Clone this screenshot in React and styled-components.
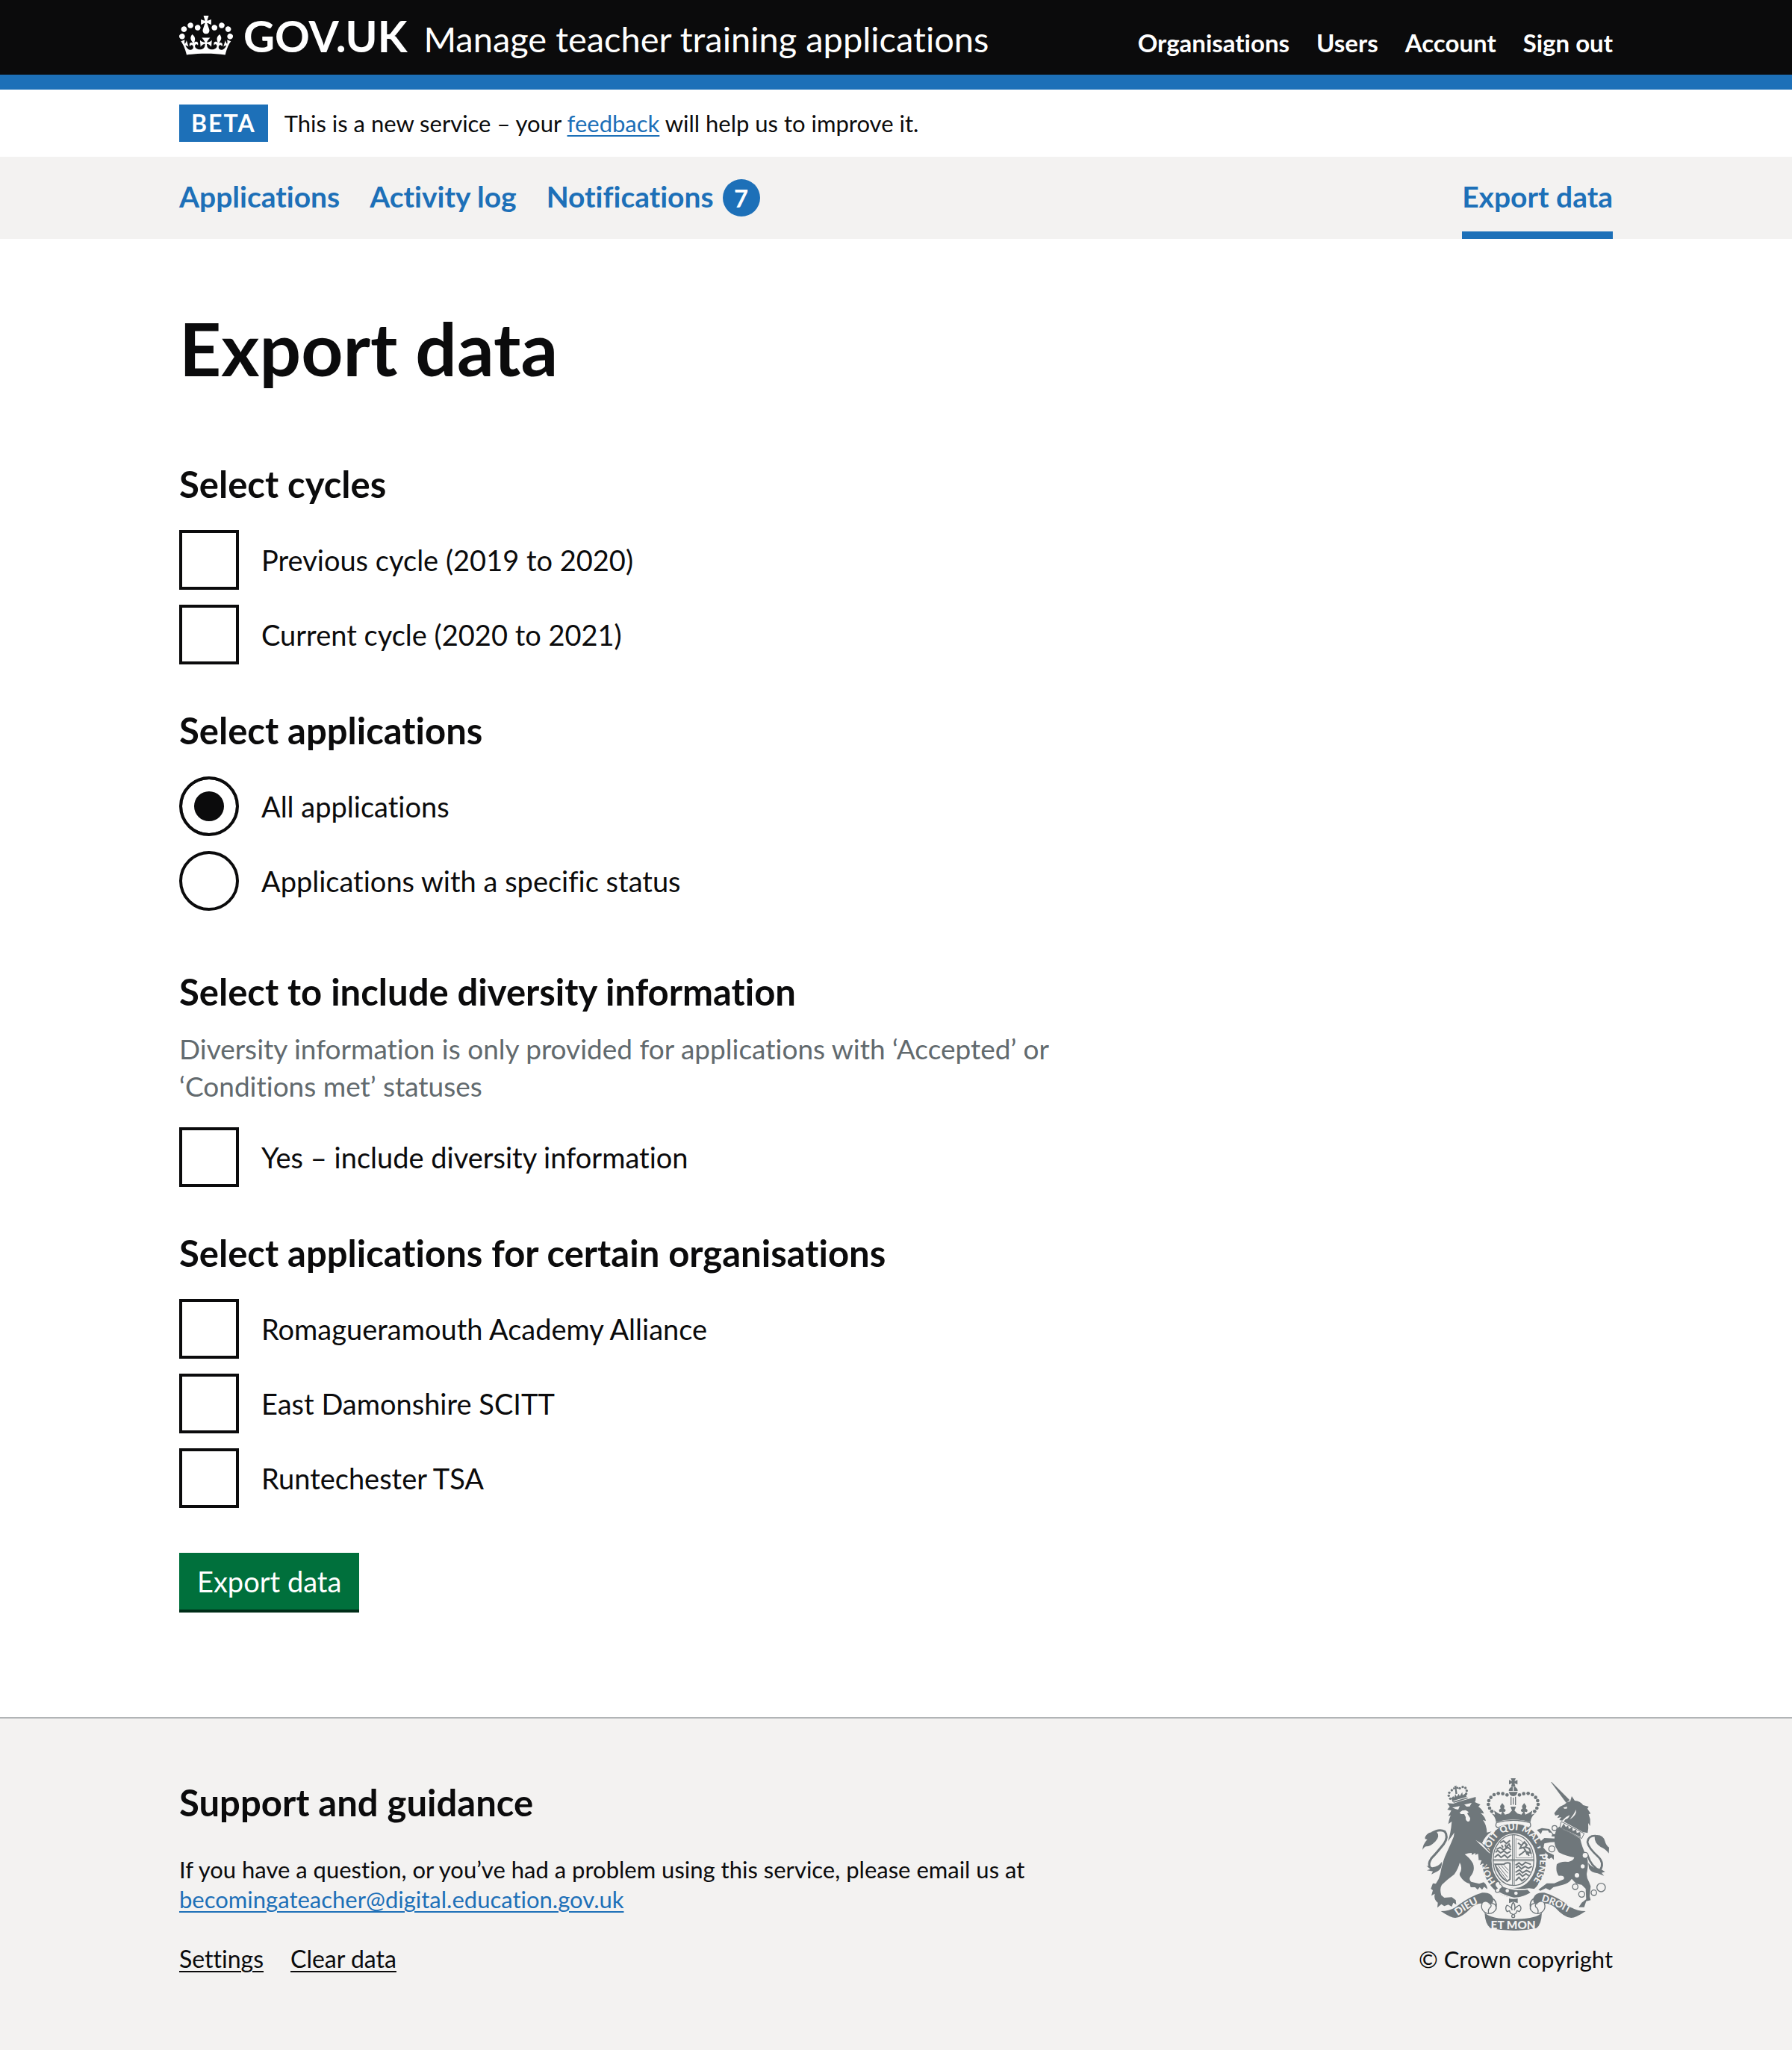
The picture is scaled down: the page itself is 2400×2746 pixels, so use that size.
import React from "react";
import styled, { createGlobalStyle } from "styled-components";

const blue = "#1d70b8";
const ink = "#0b0b0c";
const pale = "#f3f2f1";
const crestGrey = "#6f777b";

const GlobalStyle = createGlobalStyle`
  * { box-sizing: border-box; }
  body {
    margin: 0;
    background: #ffffff;
    color: ${ink};
    font-family: Lato, "Liberation Sans", Arial, sans-serif;
    font-size: 38px;
    line-height: 50px;
    font-variant-ligatures: none;
  }
  h1, h2, p, ul, fieldset, legend { margin: 0; padding: 0; }
  fieldset { border: 0; min-width: 0; }
  ul { list-style: none; }
`;

const Container = styled.div`
  width: calc(100% - 60px);
  max-width: 1920px;
  margin: 0 auto;
`;

const Header = styled.header`
  background: ${ink};
  border-bottom: 20px solid ${blue};
`;

const HeaderRow = styled(Container)`
  display: flex;
  align-items: baseline;
  justify-content: space-between;
  padding: 18px 0 22px;
`;

const Brand = styled.div`
  display: flex;
  align-items: baseline;
  gap: 22px;
`;

const LogoLink = styled.a`
  display: flex;
  align-items: baseline;
  gap: 14px;
  color: #ffffff;
  font-size: 58px;
  font-weight: 700;
  line-height: 60px;
  text-decoration: none;
`;

const CrownIcon = styled.svg`
  width: 72px;
  height: 53px;
  align-self: flex-start;
  margin-top: 3px;
  fill: currentColor;
`;

const ServiceLink = styled.a`
  color: #ffffff;
  font-size: 47px;
  line-height: 50px;
  text-decoration: none;
`;

const AccountList = styled.ul`
  display: flex;
  gap: 36px;
  font-size: 33px;
  line-height: 40px;
  font-weight: 700;
`;

const AccountLink = styled.a`
  color: #ffffff;
  text-decoration: none;
`;

const PhaseBanner = styled(Container)`
  display: flex;
  align-items: center;
  gap: 22px;
  padding: 20px 0;
  font-size: 31px;
  line-height: 40px;
`;

const PhaseTag = styled.strong`
  padding: 0 16px;
  background: ${blue};
  color: #ffffff;
  font-size: 32px;
  font-weight: 700;
  line-height: 50px;
  letter-spacing: 2px;
`;

const TextLink = styled.a`
  color: ${(p) => (p.$plain ? ink : blue)};
  text-decoration: underline;
  text-decoration-thickness: 2px;
  text-underline-offset: 4px;
`;

const NavBar = styled.nav`
  background: ${pale};
`;

const NavRow = styled(Container)`
  display: flex;
  justify-content: space-between;
`;

const NavList = styled.ul`
  display: flex;
  gap: 40px;
`;

const NavLink = styled.a`
  display: flex;
  align-items: baseline;
  gap: 12px;
  height: 110px;
  padding-top: 28px;
  border-bottom: 10px solid ${(p) => (p.$current ? blue : "transparent")};
  color: ${blue};
  font-size: 39px;
  font-weight: 700;
  text-decoration: none;
`;

const Badge = styled.span`
  width: 50px;
  border-radius: 50%;
  background: ${blue};
  color: #ffffff;
  font-size: 33px;
  line-height: 50px;
  text-align: center;
`;

const Main = styled(Container).attrs({ as: "main" })`
  padding: 96px 0 140px;
`;

const TwoThirds = styled.div`
  width: 65%;
`;

const Title = styled.h1`
  margin-bottom: 106px;
  font-size: 98px;
  line-height: 100px;
`;

const Group = styled.fieldset`
  margin-bottom: ${(p) => (p.$wide ? 82 : 62)}px;
`;

const Legend = styled.legend`
  font-size: 49px;
  font-weight: 700;
  line-height: 52px;
`;

const Hint = styled.p`
  padding-top: 26px;
  color: #626a6e;
  font-size: 37px;
`;

const Choices = styled.div`
  display: grid;
  gap: 20px;
  padding-top: ${(p) => (p.$afterHint ? 30 : 36)}px;
`;

const Choice = styled.div`
  display: flex;
  align-items: center;
  gap: 30px;
`;

const Checkbox = styled.input.attrs({ type: "checkbox" })`
  appearance: none;
  flex: none;
  width: 80px;
  height: 80px;
  margin: 0;
  border: 4px solid ${ink};
  background: #ffffff;
  &:checked { box-shadow: inset 0 0 0 16px #ffffff; background: ${ink}; }
`;

const Radio = styled.input.attrs({ type: "radio" })`
  appearance: none;
  flex: none;
  width: 80px;
  height: 80px;
  margin: 0;
  border: 4px solid ${ink};
  border-radius: 50%;
  background: #ffffff;
  &:checked { box-shadow: inset 0 0 0 16px #ffffff; background: ${ink}; }
`;

const SubmitButton = styled.button`
  display: block;
  height: 80px;
  margin-top: -2px;
  padding: 0 24px;
  border: 0;
  border-bottom: 4px solid #002d18;
  background: #00703c;
  color: #ffffff;
  font: inherit;
`;

const Footer = styled.footer`
  border-top: 2px solid #b1b4b6;
  background: ${pale};
`;

const FooterRow = styled(Container)`
  display: flex;
  justify-content: space-between;
  padding: 80px 0 102px;
  font-size: 31px;
  line-height: 40px;
`;

const Support = styled.div`
  width: 65%;
  padding-top: 6px;
`;

const SupportTitle = styled.h2`
  margin-bottom: 44px;
  font-size: 49px;
  line-height: 52px;
`;

const FooterLinks = styled.ul`
  display: flex;
  gap: 36px;
  margin-top: 40px;
  font-size: 32px;
`;

const Copyright = styled.a`
  display: flex;
  flex-direction: column;
  align-items: center;
  gap: 18px;
  color: ${ink};
  text-decoration: none;
`;

const CrestArt = styled.svg`
  width: 250px;
  height: 204px;
  font-family: Lato, sans-serif;
  font-weight: 900;
`;

function Crown() {
  return (
    <CrownIcon viewBox="0 0 132 97" aria-hidden="true">
      <path d="M25 30.2c3.5 1.5 7.7-.2 9.1-3.7 1.5-3.6-.2-7.8-3.9-9.2-3.6-1.4-7.6.3-9.1 3.9-1.4 3.5.3 7.5 3.9 9zM9 39.5c3.6 1.5 7.8-.2 9.2-3.7 1.5-3.6-.2-7.8-3.9-9.1-3.6-1.5-7.6.2-9.1 3.8-1.4 3.5.3 7.5 3.8 9zM4.4 57.2c3.5 1.5 7.7-.2 9.1-3.8 1.5-3.6-.2-7.7-3.9-9.1-3.5-1.5-7.6.3-9.1 3.8-1.4 3.5.3 7.6 3.9 9.1zm38.3-21.4c3.5 1.5 7.7-.2 9.1-3.8 1.5-3.6-.2-7.7-3.9-9.1-3.6-1.5-7.6.3-9.1 3.8-1.3 3.6.4 7.7 3.9 9.1zm64.4-5.6c-3.6 1.5-7.8-.2-9.1-3.7-1.5-3.6.2-7.8 3.8-9.2 3.6-1.4 7.7.3 9.2 3.9 1.3 3.5-.4 7.5-3.9 9zm15.9 9.3c-3.6 1.5-7.7-.2-9.1-3.7-1.5-3.6.2-7.8 3.7-9.1 3.6-1.5 7.7.2 9.2 3.8 1.5 3.5-.3 7.5-3.8 9zm4.7 17.7c-3.6 1.5-7.8-.2-9.2-3.8-1.5-3.6.2-7.7 3.9-9.1 3.6-1.5 7.7.3 9.2 3.8 1.3 3.5-.4 7.6-3.9 9.1zM89.3 35.8c-3.6 1.5-7.8-.2-9.2-3.8-1.4-3.6.2-7.7 3.9-9.1 3.6-1.5 7.7.3 9.2 3.8 1.4 3.6-.3 7.7-3.9 9.1zM69.7 17.7l8.9 4.7V9.3l-8.9 2.8c-.2-.3-.5-.6-.9-.9L72.4 0H59.6l3.5 11.2c-.3.3-.6.5-.9.9l-8.8-2.8v13.1l8.8-4.7c.3.3.6.7.9.9l-5 15.4v.1c-.2.8-.4 1.6-.4 2.4 0 4.1 3.1 7.5 7 8.1h.2c.3 0 .7.1 1 .1.4 0 .7 0 1-.1h.2c4-.6 7.1-4.1 7.1-8.1 0-.8-.1-1.7-.4-2.4V34l-5.1-15.4c.4-.2.7-.6 1-.9zM66 92.8c16.9 0 32.8 1.1 47.1 3.2 4-16.9 8.9-26.7 14-33.5l-9.6-3.4c1 4.9 1.1 7.2 0 10.2-1.5-1.4-3-4.3-4.2-8.7L108.6 76c2.8-2 5-3.2 7.5-3.3-4.4 9.4-10 11.9-13.6 11.2-4.3-.8-6.3-4.6-5.6-7.9 1-4.7 5.7-5.9 8-.5 4.3-8.7-3-11.4-7.6-8.8 7.1-7.2 7.9-13.5 2.1-21.1-8 6.1-8.1 12.3-4.5 20.8-4.7-5.4-12.1-2.5-9.5 6.2 3.4-5.2 7.9-2 7.2 3.1-.6 4.3-6.4 7.8-13.5 7.2-10.3-.9-10.9-8-11.2-13.8 2.5-.5 7.1 1.8 11 7.3L80.2 60c-4.1 4.4-8 5.3-12.3 5.4 1.4-4.4 8-11.6 8-11.6H55.5s6.4 7.2 7.9 11.6c-4.2-.1-8-1-12.3-5.4l1.4 16.4c3.9-5.5 8.5-7.7 10.9-7.3-.3 5.8-.9 12.8-11.1 13.8-7.2.6-12.9-2.9-13.5-7.2-.7-5 3.8-8.3 7.1-3.1 2.7-8.7-4.6-11.6-9.4-6.2 3.7-8.5 3.6-14.7-4.6-20.8-5.8 7.6-5 13.9 2.2 21.1-4.7-2.6-11.9.1-7.7 8.8 2.3-5.5 7.1-4.2 8.1.5.7 3.3-1.3 7.1-5.7 7.9-3.5.7-9-1.8-13.5-11.2 2.5.1 4.7 1.3 7.5 3.3l-4.7-15.4c-1.2 4.4-2.7 7.2-4.3 8.7-1.1-3-.9-5.3 0-10.2l-9.5 3.4c5 6.9 9.9 16.7 14 33.5 14.8-2.1 30.8-3.2 47.7-3.2z" />
    </CrownIcon>
  );
}

const archPearls = [
  [412, 133], [395, 128], [377, 127], [360, 132], [347, 143],
  [339, 156], [337, 171], [342, 186], [351, 199],
];

const capPearls = [
  [190, 114], [180, 124], [178, 136], [184, 148],
  [222, 106], [234, 101], [245, 105], [250, 116], [248, 128],
];

const chainLinks = [
  [603, 266, 10], [592, 350, 12], [726, 376, 12], [686, 502, 11],
  [712, 532, 12], [761, 526, 11], [790, 505, 17],
];

function RibbonEnd() {
  return (
    <>
      <path d="M146 600Q180 600 204 585Q262 540 312 526Q348 522 356 548Q359 562 350 572L336 566Q322 558 312 570Q296 566 270 584Q232 626 204 627Q186 627 146 600Z" />
      <path d="M312 568Q304 592 322 604Q340 616 358 604Q376 590 364 574Q356 566 342 570Q352 574 346 584Q334 592 338 608" fill={pale} stroke={crestGrey} strokeWidth="4" />
      <path d="M352 548Q372 558 368 584" fill="none" stroke={crestGrey} strokeWidth="5" />
    </>
  );
}

function Crest() {
  return (
    <CrestArt viewBox="72 66 750 612" role="img" aria-label="Royal coat of arms" fill={crestGrey}>
      <defs>
        <path id="garter" d="M440 518A104 122 0 0 1 440 274A104 122 0 0 1 440 518" />
        <path id="dieu" d="M214 619Q262 582 326 556" />
        <path id="droit" d="M549 560Q606 574 690 624" />
      </defs>

      {/* lion */}
      <path d="M172 166L196 168Q225 158 262 148L286 141Q288 152 283 162L305 172L297 180Q314 192 319 208L306 206Q324 220 327 238L315 234Q330 252 331 284L350 280Q322 300 312 326L340 356Q348 372 346 402L338 424L330 410L322 424L316 408L304 414L310 396L296 394L306 382L298 368L284 374L285 366L270 374L270 366Q255 366 242 372Q262 385 275 408Q286 436 264 462Q258 474 268 482L300 490L318 484Q332 494 333 512L320 502L312 514L302 504L294 514L284 504L266 504L262 490Q238 484 224 460Q218 450 226 440Q232 420 222 405Q216 430 200 452Q170 474 150 494Q140 510 148 536L160 546L190 544L206 556L208 574L196 566L190 582L176 574L160 580L148 572L132 586L134 566Q116 552 122 530L108 538L114 516L106 510L114 488L126 490Q140 470 144 450Q152 400 172 360Q186 330 198 300L200 284Q190 300 174 320Q186 290 190 240L176 250Q180 225 186 215L176 218L188 196L172 192L182 180Z" />
      <g fill={pale}>
        <path d="M192 184L222 178L216 192L206 190ZM240 172L270 165L262 179L250 180ZM222 203L232 196L246 194L258 202L252 208L264 226Q264 242 254 240Q244 236 246 222L240 210L226 210Z" />
      </g>
      <path d="M72 354Q74 330 92 312Q78 312 84 300Q96 278 130 282Q144 300 124 320Q104 340 88 340Q80 340 72 354Z" />
      <path d="M110 286Q140 268 162 280Q178 300 158 330Q130 365 108 388Q92 412 104 424" fill="none" stroke={crestGrey} strokeWidth="9" />
      <path d="M88 418L112 424Q136 422 150 402Q152 430 132 440L108 452L114 440L90 436L104 431Z" />

      {/* lion's crown */}
      <path d="M188 146L196 138L200 144L204 130L210 140L218 128L222 138L232 122L234 134L246 126L250 142L256 146L200 164L194 162Z" />
      <path d="M199 98L210 95L208 102L216 100L217 109L209 107L212 128L205 130L203 109L196 112L195 103L202 104Z" />
      {capPearls.map(([x, y]) => <circle key={`${x}-${y}`} cx={x} cy={y} r="5" />)}
      <path d="M196 158L254 141" stroke={pale} strokeWidth="3" />

      {/* central crown */}
      <path d="M427 66L447 66L442 78L454 73L454 91L442 86L446 100L428 100L432 86L420 91L420 73L432 78Z" />
      <path d="M419 117A18 16 0 0 1 435 100V117ZM439 100A18 16 0 0 1 455 117H439ZM419 121H455L450 132Q446 138 437 138Q428 138 424 132Z" />
      <path d="M428 140V174M437 144V172M446 140V174" stroke={crestGrey} strokeWidth="4" />
      {archPearls.map(([x, y]) => (
        <g key={`${x}-${y}`}>
          <circle cx={x} cy={y} r="7" />
          <circle cx={874 - x} cy={y} r="7" />
        </g>
      ))}
      <path d="M350 208L364 212L360 196L376 206L388 212L392 200L382 202Q376 192 386 188L384 178L393 166L402 178L400 188Q412 192 402 202L396 200L404 212L420 208L432 196L426 180L448 180L442 196L454 208L470 212L478 200L472 202Q462 192 474 188L472 178L481 166L490 178L488 188Q498 192 492 202L482 200L486 212L498 206L514 196L510 212L524 208Q508 222 506 242Q437 222 368 242Q366 222 350 208Z" />
      <path d="M376 264Q362 262 370 244Q437 226 504 244Q512 262 498 264Q437 236 376 264Z" fill={pale} stroke={crestGrey} strokeWidth="4" />

      {/* garter */}
      <ellipse cx="440" cy="397" rx="130" ry="150" fill={pale} />
      <path d="M322 338A128 148 0 0 1 350 290" fill="none" stroke={crestGrey} strokeWidth="4" />
      <ellipse cx="440" cy="397" rx="109" ry="129" fill={pale} stroke={crestGrey} strokeWidth="38" />
      <g fill={pale} fontSize="37">
        <text><textPath href="#garter" startOffset="84">HON</textPath></text>
        <text><textPath href="#garter" startOffset="206">SOIT</textPath></text>
        <text><textPath href="#garter" startOffset="302">QUI</textPath></text>
        <text><textPath href="#garter" startOffset="384">MAL</textPath></text>
        <text><textPath href="#garter" startOffset="470">Y</textPath></text>
        <text><textPath href="#garter" startOffset="507">PENSE</textPath></text>
      </g>

      {/* shield */}
      <ellipse cx="438" cy="395" rx="82" ry="102" fill="none" stroke={crestGrey} strokeWidth="4" />
      <path d="M434 292V496M441 292V496M356 392H520M356 398H520" stroke={crestGrey} strokeWidth="3" />
      <g fill="none" stroke={crestGrey} strokeWidth="6">
        <path d="M384 326L398 318L410 328L424 316M390 334L396 344M404 332L408 344L420 330L426 344M370 352L384 344L398 354L416 344L428 354M366 364L374 356L386 366L400 358L412 368L426 360M362 384L376 372L388 384L402 374L414 386L428 374" />
        <path d="M446 416L460 406L472 416L486 404L508 412M448 426L458 418L470 430L484 420L498 428L512 420M446 444L462 434L474 446L490 436L506 444M448 456L462 448L474 460L488 450L500 458M446 478L460 464L472 478L486 468" />
        <path d="M456 326L470 336L464 348L478 344L486 356L474 366L460 376M470 336L482 322L492 334L484 342L502 348L508 366L494 362L500 378M486 356L494 374" />
        <path d="M448 308V386H514M448 308Q490 318 514 384" strokeWidth="2" />
        <path d="M364 412L398 412Q412 402 424 408V472L412 480Q380 462 364 412Z" />
        <path d="M376 416L414 464M388 416L416 448M400 416L418 436M372 424L410 474" strokeWidth="3" />
      </g>

      {/* buckle and strap */}
      <path d="M376 480Q430 520 500 508L534 512Q490 550 438 548Q396 540 366 522Q390 506 376 480Z" fill={pale} />
      <path d="M386 498Q436 522 494 514L506 526Q470 546 440 545Q412 540 378 522Z" />
      <path d="M368 484Q382 476 384 492Q402 500 384 512Q384 528 368 524Q360 514 372 508Q358 494 368 484Z" fill={pale} stroke={crestGrey} strokeWidth="4" />
      <circle cx="413" cy="518" r="7" fill={pale} />
      <circle cx="448" cy="528" r="7" fill={pale} />

      {/* lion's paw over the garter */}
      <path d="M290 318L316 332L340 354Q348 372 346 402L338 424L330 410L322 424L316 408L304 414L310 396L298 390Z" />
      <path d="M286 314L312 330L346 368L340 366L308 336Z" fill={pale} />

      {/* unicorn */}
      <path d="M588 81L592 82L664 154L650 165Z" />
      <path d="M602 206L616 188Q626 178 642 172L654 162L666 158L672 138L684 156Q706 158 718 174L740 180L735 188L748 208L740 211L746 230L746 258L738 246Q740 270 736 286L716 282L640 240L646 232Q658 230 664 214Q648 220 634 236L622 234L630 222L614 226L622 212L606 216Z" />
      <path d="M638 184L654 180L652 188L642 188ZM690 192Q692 216 664 232Q680 212 690 192Z" fill={pale} />
      <path d="M630 240L722 288L712 308L624 264Z" fill={pale} stroke={crestGrey} strokeWidth="3" />
      <path d="M632 260L640 248L648 262L658 256L660 270L674 262L676 278L690 272L692 286L706 282L708 302L630 266Z" />
      <path d="M622 260Q640 276 664 284L706 308Q712 340 730 376Q742 400 734 440Q728 462 742 484L748 500L744 540L748 556L730 560L722 584L700 584L712 566L730 552L728 510L712 494L690 490L672 470Q660 488 636 494L598 504L584 516L568 508L546 518L538 514L556 500L572 488L602 488L640 472Q646 455 620 458Q606 440 612 412Q628 398 658 402Q680 398 682 384Q650 380 620 364L606 340Q600 320 604 294Q608 270 622 260Z" />
      <path d="M612 300L592 300L576 276L554 276L548 290L532 274L552 266L582 270L598 290L614 292Z" />
      <path d="M612 322Q585 322 562 328L558 345L574 362L600 374L600 394L590 384L582 390L574 386L576 374L548 350L544 322L562 306L606 308Z" />
      <path d="M736 376Q752 424 786 436Q804 408 780 383Q738 345 735 322Q738 296 768 297" fill="none" stroke={crestGrey} strokeWidth="8" />
      <path d="M756 296Q798 286 806 320Q810 336 822 344L821 368Q808 350 788 342Q762 326 764 300Z" />
      <path d="M738 406Q756 430 790 432L806 442L792 446L802 458L776 448Q752 446 742 430Z" />
      <g fill={pale} stroke={crestGrey} strokeWidth="4">
        {chainLinks.map(([x, y, r]) => <circle key={`${x}-${y}`} cx={x} cy={y} r={r} />)}
      </g>
      <g fill={pale}>
        <circle cx="716" cy="420" r="8" />
        <circle cx="693" cy="456" r="9" />
        <circle cx="585" cy="292" r="8" />
      </g>

      {/* motto ribbon */}
      <RibbonEnd />
      <g transform="translate(874 0) scale(-1 1)"><RibbonEnd /></g>
      <path d="M322 606Q345 632 437 632Q530 632 552 606Q550 656 530 668Q480 678 437 678Q390 678 345 668Q324 652 322 606Z" />
      <g fill={pale}>
        <text fontSize="41"><textPath href="#dieu">DIEU</textPath></text>
        <text fontSize="39"><textPath href="#droit">DROIT</textPath></text>
        <text x="437" y="671" fontSize="46" textAnchor="middle">ET MON</text>
      </g>

      {/* plant badge */}
      <path d="M420 549Q437 554 455 549V568L437 562L420 568Z" />
      <path d="M437 564Q426 578 433 596Q428 582 412 576Q402 588 412 602L422 598Q424 610 434 612V622H441V612Q450 610 452 598L462 602Q474 588 462 576Q446 582 441 596Q448 578 437 564Z" fill={pale} stroke={crestGrey} strokeWidth="4" />
      <circle cx="437" cy="620" r="6" fill={pale} stroke={crestGrey} strokeWidth="4" />
    </CrestArt>
  );
}

function CheckboxItem({ id, name, children }) {
  return (
    <Choice>
      <Checkbox id={id} name={name} />
      <label htmlFor={id}>{children}</label>
    </Choice>
  );
}

function RadioItem({ id, name, defaultChecked, children }) {
  return (
    <Choice>
      <Radio id={id} name={name} defaultChecked={defaultChecked} />
      <label htmlFor={id}>{children}</label>
    </Choice>
  );
}

const accountItems = ["Organisations", "Users", "Account", "Sign out"];
const organisations = ["Romagueramouth Academy Alliance", "East Damonshire SCITT", "Runtechester TSA"];

export default function App() {
  return (
    <>
      <GlobalStyle />
      <Header>
        <HeaderRow>
          <Brand>
            <LogoLink href="#"><Crown /><span>GOV.UK</span></LogoLink>
            <ServiceLink href="#">Manage teacher training applications</ServiceLink>
          </Brand>
          <AccountList>
            {accountItems.map((item) => (
              <li key={item}><AccountLink href="#">{item}</AccountLink></li>
            ))}
          </AccountList>
        </HeaderRow>
      </Header>

      <PhaseBanner>
        <PhaseTag>BETA</PhaseTag>
        <span>This is a new service – your <TextLink href="#">feedback</TextLink> will help us to improve it.</span>
      </PhaseBanner>

      <NavBar aria-label="Primary">
        <NavRow>
          <NavList>
            <li><NavLink href="#">Applications</NavLink></li>
            <li><NavLink href="#">Activity log</NavLink></li>
            <li><NavLink href="#">Notifications <Badge>7</Badge></NavLink></li>
          </NavList>
          <NavList>
            <li><NavLink href="#" $current aria-current="page">Export data</NavLink></li>
          </NavList>
        </NavRow>
      </NavBar>

      <Main>
        <TwoThirds as="form" onSubmit={(e) => e.preventDefault()}>
          <Title>Export data</Title>

          <Group>
            <Legend>Select cycles</Legend>
            <Choices>
              <CheckboxItem id="cycle-2020" name="cycle">Previous cycle (2019 to 2020)</CheckboxItem>
              <CheckboxItem id="cycle-2021" name="cycle">Current cycle (2020 to 2021)</CheckboxItem>
            </Choices>
          </Group>

          <Group $wide>
            <Legend>Select applications</Legend>
            <Choices>
              <RadioItem id="status-all" name="status" defaultChecked>All applications</RadioItem>
              <RadioItem id="status-some" name="status">Applications with a specific status</RadioItem>
            </Choices>
          </Group>

          <Group aria-describedby="diversity-hint">
            <Legend>Select to include diversity information</Legend>
            <Hint id="diversity-hint">
              Diversity information is only provided for applications with ‘Accepted’ or ‘Conditions met’ statuses
            </Hint>
            <Choices $afterHint>
              <CheckboxItem id="diversity" name="diversity">Yes – include diversity information</CheckboxItem>
            </Choices>
          </Group>

          <Group>
            <Legend>Select applications for certain organisations</Legend>
            <Choices>
              {organisations.map((name, i) => (
                <CheckboxItem key={name} id={`organisation-${i}`} name="organisation">{name}</CheckboxItem>
              ))}
            </Choices>
          </Group>

          <SubmitButton type="submit">Export data</SubmitButton>
        </TwoThirds>
      </Main>

      <Footer>
        <FooterRow>
          <Support>
            <SupportTitle>Support and guidance</SupportTitle>
            <p>
              If you have a question, or you’ve had a problem using this service, please email us at{" "}
              <TextLink href="mailto:becomingateacher@digital.education.gov.uk">becomingateacher@digital.education.gov.uk</TextLink>
            </p>
            <FooterLinks>
              <li><TextLink href="#" $plain>Settings</TextLink></li>
              <li><TextLink href="#" $plain>Clear data</TextLink></li>
            </FooterLinks>
          </Support>
          <Copyright href="#">
            <Crest />
            <span>© Crown copyright</span>
          </Copyright>
        </FooterRow>
      </Footer>
    </>
  );
}
